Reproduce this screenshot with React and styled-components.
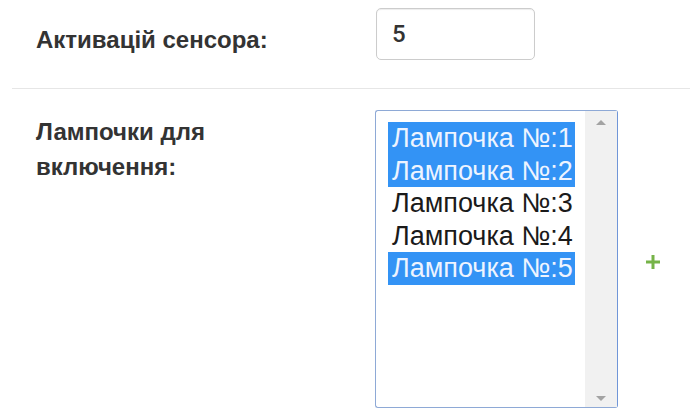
import React from 'react'
import styled, { createGlobalStyle } from 'styled-components'

const GlobalStyle = createGlobalStyle`
  html, body {
    margin: 0;
    background: #fff;
  }
  body {
    font-family: "Liberation Sans", Arial, sans-serif;
  }
`

const Form = styled.form`
  width: 690px;
  height: 408px;
  overflow: hidden;
`

const Row = styled.div`
  display: grid;
  grid-template-columns: 339px 1fr;
  align-items: start;
  margin-left: 12px;
  padding: ${p => p.$pad};
  border-bottom: ${p => (p.$divider ? '1px solid #e6e6e6' : 'none')};
`

const Label = styled.label`
  display: block;
  margin-top: ${p => p.$offset}px;
  font-size: 24px;
  font-weight: 700;
  line-height: 35px;
  color: #333;
`

const TextInput = styled.input`
  box-sizing: border-box;
  width: 159px;
  height: 52px;
  margin-left: 1px;
  padding: 0 15px;
  border: 1px solid #ccc;
  border-radius: 5px;
  box-shadow: inset 0 1px 1px rgba(0, 0, 0, 0.075);
  font-family: Roboto, sans-serif;
  font-size: 24px;
  font-weight: 500;
  color: #333;
  outline: none;
`

const Control = styled.div`
  display: flex;
  align-items: center;
  gap: 28px;
`

const ListBox = styled.div`
  box-sizing: border-box;
  display: flex;
  width: 243px;
  height: 298px;
  border: 1px solid #8ea9d6;
  border-right-color: #7096d8;
  border-radius: 3px;
  background: #fff;
`

const Options = styled.div`
  flex: 1;
  padding: 11px 0 0 12px;
`

const Option = styled.div`
  box-sizing: border-box;
  width: 187px;
  height: 32.5px;
  padding: 0 4px;
  font-family: "Liberation Sans", Arial, sans-serif;
  font-size: 27px;
  line-height: 32.5px;
  white-space: nowrap;
  overflow: hidden;
  color: ${p => (p.$selected ? '#eef4ff' : '#1a1a1a')};
  background: ${p => (p.$selected ? '#3393f5' : 'transparent')};
`

const Scrollbar = styled.div`
  width: 32px;
  background: #f1f1f1;
  display: flex;
  flex-direction: column;
  justify-content: space-between;
  align-items: center;
  padding: 9px 0 6px;
  box-sizing: border-box;
`

const Arrow = styled.span`
  width: 0;
  height: 0;
  border-left: 5px solid transparent;
  border-right: 5px solid transparent;
  ${p =>
    p.$down
      ? 'border-top: 5px solid #a3a3a3;'
      : 'border-bottom: 5px solid #a3a3a3;'}
`

const AddButton = styled.button`
  padding: 0;
  margin-top: 6px;
  border: none;
  background: none;
  cursor: pointer;
  display: flex;
`

const lamps = [1, 2, 3, 4, 5]
const selected = [1, 2, 5]

const App = () => {
  return (
    <>
      <GlobalStyle />
      <Form>
        <Row $divider $pad="8px 24px 28px">
          <Label $offset={14}>Активацій сенсора:</Label>
          <TextInput defaultValue="5" />
        </Row>
        <Row $pad="21px 24px 0">
          <Label $offset={4}>
            Лампочки для
            <br />
            включення:
          </Label>
          <Control>
            <ListBox>
              <Options>
                {lamps.map(n => (
                  <Option key={n} $selected={selected.includes(n)}>
                    Лампочка №:{n}
                  </Option>
                ))}
              </Options>
              <Scrollbar>
                <Arrow />
                <Arrow $down />
              </Scrollbar>
            </ListBox>
            <AddButton type="button">
              <svg width="14" height="14" viewBox="0 0 14 14">
                <path d="M5.5 0h3v5.5H14v3H8.5V14h-3V8.5H0v-3h5.5z" fill="#76b348" />
              </svg>
            </AddButton>
          </Control>
        </Row>
      </Form>
    </>
  )
}

export default App
